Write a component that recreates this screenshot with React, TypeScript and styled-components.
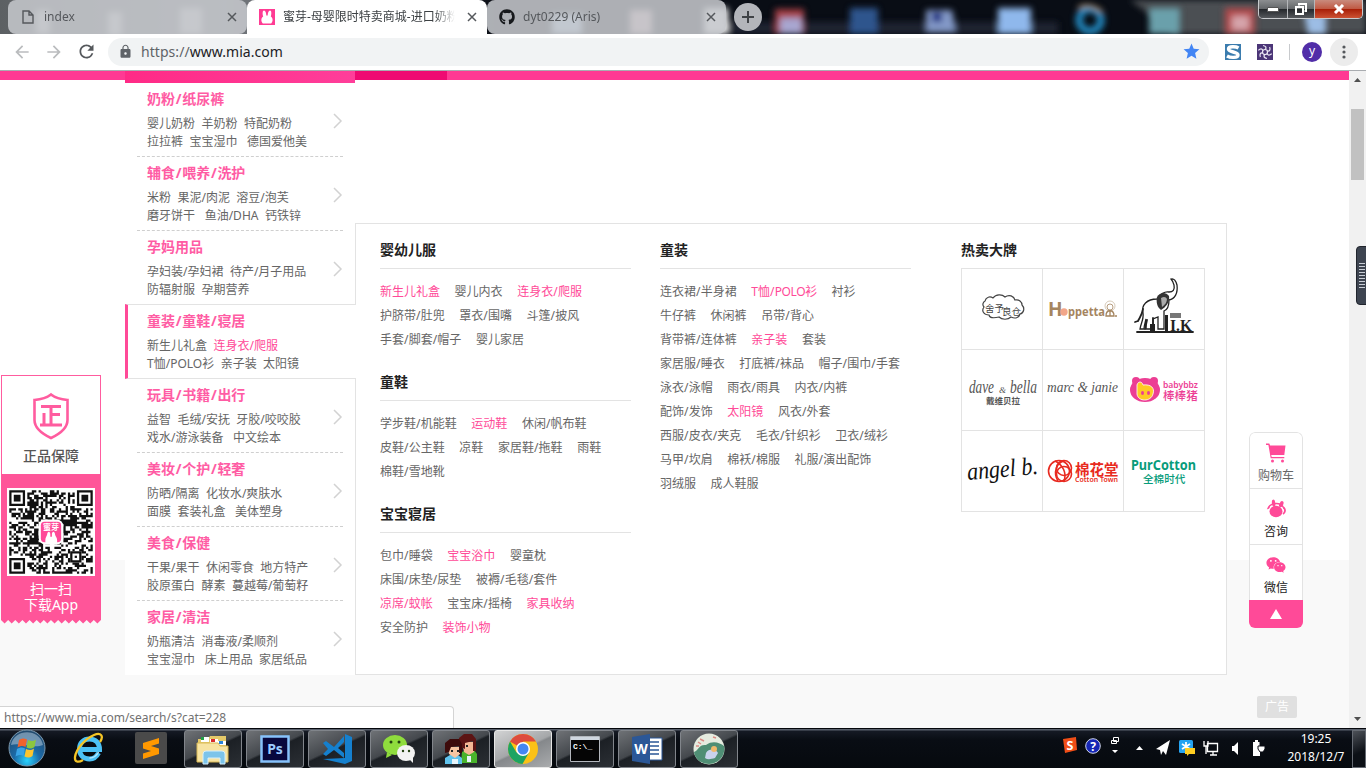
import React from "react";
import styled, { createGlobalStyle } from "styled-components";
import { FaGithub, FaWeixin } from "react-icons/fa";
import { MdArrowBack, MdArrowForward, MdLock, MdRefresh, MdStar } from "react-icons/md";

const PINK = "#ff4a98";
const LINE = "#e3e3e3";

const Global = createGlobalStyle`
  * { box-sizing: border-box; }
  body { margin: 0; overflow: hidden; }
  svg { display: block; flex: none; }
`;

const Screen = styled.div`
  width: 1366px;
  height: 768px;
  display: flex;
  flex-direction: column;
  overflow: hidden;
  background: #fff;
  color: #666;
  font: 12px/18px "Noto Sans", "Noto Sans CJK SC", sans-serif;
`;

/* ---------- browser frame ---------- */

const TabStrip = styled.header`
  position: relative;
  height: 34px;
  flex: none;
  display: flex;
  align-items: flex-start;
  padding-left: 8px;
  background: #090d15;
`;

const Backdrop = styled.svg`
  position: absolute;
  left: 0;
  top: 0;
`;

const Tab = styled.div<{ $active?: boolean; $width: number }>`
  position: relative;
  width: ${(p) => p.$width}px;
  height: 34px;
  display: flex;
  align-items: center;
  padding: 0 10px 0 12px;
  border-radius: ${(p) => (p.$active ? "8px 8px 0 0" : "8px")};
  background: ${(p) => (p.$active ? "#fff" : "rgba(196, 198, 203, 0.88)")};
  color: ${(p) => (p.$active ? "#3c4043" : "#55585c")};
`;

const TabIcon = styled.span`
  width: 16px;
  height: 16px;
  display: flex;
  align-items: center;
  justify-content: center;
`;

const TabTitle = styled.span<{ $fade?: boolean }>`
  flex: 1;
  margin: 0 12px 0 8px;
  overflow: hidden;
  white-space: nowrap;
  ${(p) => p.$fade && "mask-image: linear-gradient(90deg, #000 88%, transparent);"}
`;

const NewTab = styled.div`
  position: relative;
  width: 28px;
  height: 28px;
  margin: 3px 0 0 8px;
  border-radius: 50%;
  background: #b3b5ba;
  display: flex;
  align-items: center;
  justify-content: center;
`;

const WindowControls = styled.div`
  position: relative;
  display: flex;
  height: 19px;
  margin: 0 3px 0 auto;
  border: 1px solid #c9cbce;
  border-top: 0;
  border-radius: 0 0 5px 5px;
  overflow: hidden;
`;

const ControlButton = styled.div<{ $w: number; $close?: boolean }>`
  width: ${(p) => p.$w}px;
  display: flex;
  align-items: center;
  justify-content: center;
  background: ${(p) =>
    p.$close
      ? "linear-gradient(#c98b7d, #c05a44 48%, #a82008 52%, #cc5233)"
      : "linear-gradient(#8c8e90, #65686b 48%, #25282c 52%, #55585c)"};
  & + & { border-left: 1px solid #b5b7ba; }
`;

const Toolbar = styled.div`
  height: 37px;
  flex: none;
  display: flex;
  align-items: center;
  padding: 0 8px 1px 6px;
  border-bottom: 1px solid #a9acb0;
  background: #fff;
`;

const ToolButton = styled.span<{ $color: string }>`
  width: 32px;
  display: flex;
  justify-content: center;
  color: ${(p) => p.$color};
`;

const AddressBar = styled.div`
  width: 1101px;
  height: 28px;
  margin-left: 6px;
  padding: 0 8px 0 10px;
  border-radius: 14px;
  background: #f1f3f4;
  display: flex;
  align-items: center;
  color: #5f6368;
`;

const Url = styled.span`
  flex: 1;
  margin-left: 8px;
  font-size: 14px;
  letter-spacing: 0.05px;
  b { color: #202124; font-weight: 400; }
`;

const Extension = styled.span<{ $ml: number }>`
  width: 16px;
  height: 16px;
  margin-left: ${(p) => p.$ml}px;
`;

const Divider = styled.span`
  width: 1px;
  height: 16px;
  margin-left: 16px;
  background: #c8cacd;
`;

const Avatar = styled.span`
  width: 20px;
  height: 20px;
  margin-left: 12px;
  border-radius: 50%;
  background: #512da8;
  color: #fff;
  text-align: center;
  line-height: 18px;
`;

const MenuButton = styled.span`
  width: 28px;
  height: 28px;
  margin-left: 8px;
  border-radius: 50%;
  background: #ececec;
  display: flex;
  align-items: center;
  justify-content: center;
`;

/* ---------- page ---------- */

const Body = styled.div`
  height: 657px;
  flex: none;
  display: flex;
`;

const Viewport = styled.main`
  position: relative;
  width: 1349px;
  overflow: hidden;
  background: linear-gradient(#fff 489px, #f9f9f9 489px);
`;

const NavBar = styled.div`
  height: 9px;
  display: flex;
  padding-left: 125px;
  background: #ff3993;
`;

const NavHead = styled.div`
  width: 230px;
  height: 12px;
  background: linear-gradient(100deg, #ff2a86, #ff3e9a);
`;

const NavCurrent = styled.div`
  width: 92px;
  background: #ef0a72;
`;

const Main = styled.div`
  display: flex;
  align-items: flex-start;
  padding: 3px 0 0 125px;
`;

const Sidebar = styled.nav`
  position: relative;
  z-index: 1;
  width: 230px;
  height: 592px;
  background: #fff;
`;

const Category = styled.section<{ $active?: boolean; $plain?: boolean }>`
  height: 74px;
  margin: 0 12px;
  padding: 6px 0 0 10px;
  display: flex;
  justify-content: space-between;
  white-space: pre;
  border-bottom: ${(p) => (p.$plain ? "0" : "1px dashed #cfcfcf")};
  ${(p) =>
    p.$active &&
    `
    width: 231px;
    height: 75px;
    margin: -1px 0 0;
    padding-left: 19px;
    background: #fff;
    border: 1px solid ${LINE};
    border-left: 3px solid ${PINK};
    border-right: 0;
  `}
`;

const CategoryTitle = styled.h3`
  margin: 0 0 6px;
  font-size: 14px;
  line-height: 20px;
  font-weight: 700;
  color: #ff5ca4;
  i { font-style: normal; margin: 0 0.7px; }
`;

const CategoryLine = styled.div`
  height: 18px;
  word-spacing: 0.1px;
`;

const Chevron = styled.svg`
  margin-top: 24px;
`;

const Em = styled.em`
  font-style: normal;
  color: ${PINK};
`;

const Flyout = styled.div`
  width: 872px;
  height: 452px;
  margin: 140px 0 0 0;
  padding: 8px 0 0 24px;
  display: flex;
  border: 1px solid ${LINE};
  background: #fff;
`;

const Column = styled.div<{ $gap: number }>`
  width: 251px;
  margin-right: ${(p) => p.$gap}px;
`;

const GroupTitle = styled.h4<{ $bare?: boolean }>`
  height: ${(p) => (p.$bare ? 36 : 37)}px;
  margin: 0;
  border-bottom: ${(p) => (p.$bare ? "0" : `1px solid ${LINE}`)};
  font-size: 14px;
  line-height: 36px;
  font-weight: 700;
  color: #222;
`;

const GroupBody = styled.div`
  padding: 11px 0 12px;
`;

const GroupRow = styled.div`
  height: 24px;
  display: flex;
  align-items: center;
  gap: 14.6px;
  white-space: nowrap;
`;

const Link = styled.a<{ $hot?: boolean }>`
  color: ${(p) => (p.$hot ? PINK : "#666")};
  i { font-style: normal; margin-right: 0.2px; }
`;

const BrandGrid = styled.div`
  width: 244px;
  display: grid;
  grid-template-columns: repeat(3, 81px);
  grid-auto-rows: 81px;
  border: solid ${LINE};
  border-width: 1px 0 0 1px;
`;

const BrandCell = styled.div`
  border: solid ${LINE};
  border-width: 0 1px 1px 0;
`;

/* ---------- floating widgets ---------- */

const AppPromo = styled.aside`
  position: absolute;
  left: 1px;
  top: 304px;
  width: 100px;
`;

const Guarantee = styled.div`
  height: 99px;
  padding-top: 16px;
  display: flex;
  flex-direction: column;
  align-items: center;
  border: 1px solid #ff5c9f;
  border-bottom: 0;
  background: #fff;
  color: #555;
  font-size: 14px;
  font-weight: 500;
  line-height: 20px;
`;

const ScanBox = styled.div`
  height: 146px;
  padding-top: 14px;
  display: flex;
  flex-direction: column;
  align-items: center;
  background: #ff5599;
  color: #fff;
  font-size: 14px;
  line-height: 16px;
`;

const ScanText = styled.div`
  margin-top: 5px;
  text-align: center;
`;

const Tools = styled.aside`
  position: absolute;
  left: 1249px;
  top: 361px;
  width: 54px;
  border-radius: 6px;
  overflow: hidden;
  background: #fff;
`;

const ToolItem = styled.div<{ $dark?: boolean; $first?: boolean }>`
  height: 56px;
  padding-top: 10px;
  display: flex;
  flex-direction: column;
  align-items: center;
  gap: 4px;
  border: 1px solid ${LINE};
  border-bottom: 0;
  border-radius: ${(p) => (p.$first ? "6px 6px 0 0" : "0")};
  color: ${(p) => (p.$dark ? "#222" : "#666")};
`;

const ToTop = styled.div`
  height: 28px;
  display: flex;
  align-items: center;
  justify-content: center;
  background: #ff4a98;
`;

const AdLabel = styled.div`
  position: absolute;
  left: 1257px;
  top: 625px;
  width: 40px;
  height: 22px;
  border-radius: 2px;
  background: #e0e0e0;
  color: #fff;
  line-height: 22px;
  text-align: center;
`;

const StatusBubble = styled.div`
  position: absolute;
  left: -1px;
  bottom: 0;
  width: 455px;
  height: 22px;
  padding-left: 4px;
  line-height: 21px;
  border: 1px solid #d4d4d4;
  border-bottom: 0;
  border-radius: 0 4px 0 0;
  background: #fff;
  color: #717171;
`;

const Scrollbar = styled.div`
  width: 17px;
  display: flex;
  flex-direction: column;
  align-items: center;
  background: #f1f1f1;
  padding: 7px 0;
`;

const Thumb = styled.div`
  width: 13px;
  height: 71px;
  margin: 27px 0 auto;
  background: #c1c1c1;
`;

const SideGrip = styled.div`
  position: absolute;
  left: 1356px;
  top: 246px;
  width: 12px;
  height: 59px;
  border-radius: 4px 0 0 4px;
  background: #3d4450;
  border: 1px solid #20242c;
  display: flex;
  align-items: center;
  justify-content: center;
`;

/* ---------- taskbar ---------- */

const Taskbar = styled.footer`
  height: 40px;
  display: flex;
  align-items: center;
  background: linear-gradient(#05070c 1px, #59606c 1px, #59606c 2px, #151a24 3px, #090d14 12px, #060a0e);
`;

const Launcher = styled.div<{ $w: number }>`
  width: ${(p) => p.$w}px;
  display: flex;
  justify-content: center;
`;

const TaskButton = styled.div<{ $front?: boolean }>`
  width: 58px;
  height: 38px;
  margin: 1px 4px 0 0;
  display: flex;
  align-items: center;
  justify-content: center;
  border: 1px solid ${(p) => (p.$front ? "#e6e6e6" : "#81858b")};
  border-radius: 3px;
  background: ${(p) =>
    p.$front
      ? "linear-gradient(155deg, #d2d3d4, #a5a7a9 48%, #85888b 52%, #a9abad)"
      : "linear-gradient(155deg, #6f7276, #44484d 46%, #1c2025 50%, #2b2f34)"};
`;

const Tray = styled.div`
  margin-left: auto;
`;

const Clock = styled.div`
  width: 74px;
  margin-left: 0;
  color: #fff;
  line-height: 18px;
  text-align: center;
  padding-left: 2px;
`;

const ShowDesktop = styled.div`
  width: 14px;
  height: 38px;
  margin: 1px 0 0 0;
  border: 1px solid #666b73;
  background: linear-gradient(155deg, #4d5158, #0c1016 60%);
`;

/* ---------- data ---------- */

type CategoryData = { title: string; lines: string[]; active?: boolean; plain?: boolean };

const categories: CategoryData[] = [
  { title: "奶粉/纸尿裤", lines: ["婴儿奶粉  羊奶粉  特配奶粉", "拉拉裤  宝宝湿巾   德国爱他美"] },
  { title: "辅食/喂养/洗护", lines: ["米粉  果泥/肉泥  溶豆/泡芙", "磨牙饼干   鱼油/DHA  钙铁锌"] },
  { title: "孕妈用品", lines: ["孕妇装/孕妇裙  待产/月子用品", "防辐射服  孕期营养"], plain: true },
  { title: "童装/童鞋/寝居", lines: ["新生儿礼盒  *连身衣/爬服*", "T恤/POLO衫  亲子装  太阳镜"], active: true },
  { title: "玩具/书籍/出行", lines: ["益智  毛绒/安抚  牙胶/咬咬胶", "戏水/游泳装备   中文绘本"] },
  { title: "美妆/个护/轻奢", lines: ["防晒/隔离  化妆水/爽肤水", "面膜  套装礼盒   美体塑身"] },
  { title: "美食/保健", lines: ["干果/果干  休闲零食  地方特产", "胶原蛋白  酵素  蔓越莓/葡萄籽"] },
  { title: "家居/清洁", lines: ["奶瓶清洁  消毒液/柔顺剂", "宝宝湿巾   床上用品  家居纸品"], plain: true },
];

type Group = { title: string; rows: string[] };

const infant: Group[] = [
  { title: "婴幼儿服", rows: ["*新生儿礼盒 婴儿内衣 *连身衣/爬服", "护脐带/肚兜 罩衣/围嘴 斗篷/披风", "手套/脚套/帽子 婴儿家居"] },
  { title: "童鞋", rows: ["学步鞋/机能鞋 *运动鞋 休闲/帆布鞋", "皮鞋/公主鞋 凉鞋 家居鞋/拖鞋 雨鞋", "棉鞋/雪地靴"] },
  { title: "宝宝寝居", rows: ["包巾/睡袋 *宝宝浴巾 婴童枕", "床围/床垫/尿垫 被褥/毛毯/套件", "*凉席/蚊帐 宝宝床/摇椅 *家具收纳", "安全防护 *装饰小物"] },
];

const children: Group[] = [
  {
    title: "童装",
    rows: [
      "连衣裙/半身裙 *T恤/POLO衫 衬衫",
      "牛仔裤 休闲裤 吊带/背心",
      "背带裤/连体裤 *亲子装 套装",
      "家居服/睡衣 打底裤/袜品 帽子/围巾/手套",
      "泳衣/泳帽 雨衣/雨具 内衣/内裤",
      "配饰/发饰 *太阳镜 风衣/外套",
      "西服/皮衣/夹克 毛衣/针织衫 卫衣/绒衫",
      "马甲/坎肩 棉袄/棉服 礼服/演出配饰",
      "羽绒服 成人鞋服",
    ],
  },
];

const slashed = (text: string) =>
  text.split("/").map((part, n) => (
    <React.Fragment key={n}>
      {n > 0 && <i>/</i>}
      {part.includes("POLO") ? <span style={{ letterSpacing: "-0.35px" }}>{part}</span> : part}
    </React.Fragment>
  ));

const Groups = ({ items }: { items: Group[] }) => (
  <>
    {items.map((g) => (
      <section key={g.title}>
        <GroupTitle>{g.title}</GroupTitle>
        <GroupBody>
          {g.rows.map((row) => (
            <GroupRow key={row}>
              {row.split(" ").map((w) => (
                <Link key={w} $hot={w[0] === "*"}>{slashed(w.replace("*", ""))}</Link>
              ))}
            </GroupRow>
          ))}
        </GroupBody>
      </section>
    ))}
  </>
);

/* ---------- drawings ---------- */

const QR_SIZE = 37;

const qrModules = (() => {
  let path = "";
  let seed = 20181;
  const corner = (x: number, y: number) =>
    (x < 8 && y < 8) || (x > QR_SIZE - 9 && y < 8) || (x < 8 && y > QR_SIZE - 9);
  for (let y = 0; y < QR_SIZE; y++) {
    for (let x = 0; x < QR_SIZE; x++) {
      seed = (seed * 1103515245 + 12345) % 2147483648;
      const align = x > 26 && x < 32 && y > 26 && y < 32;
      if (!corner(x, y) && !align && seed / 2147483648 > 0.47) path += `M${x} ${y}h1v1h-1z`;
    }
  }
  return path;
})();

const QrCode = () => (
  <svg width="88" height="88" viewBox="-1 -1 39 39">
    <rect x="-1" y="-1" width="39" height="39" fill="#fff" />
    <path d={qrModules} fill="#111" />
    {[[0, 0], [30, 0], [0, 30]].map(([x, y]) => (
      <g key={`${x}-${y}`} transform={`translate(${x} ${y})`} fill="#111">
        <path d="M.5 .5h6v6h-6z" fill="none" stroke="#111" />
        <path d="M2 2h3v3H2z" />
      </g>
    ))}
    <path d="M27.5 27.5h4v4h-4z" fill="#fff" stroke="#111" />
    <path d="M29 29h1v1h-1z" fill="#111" />
    <rect x="13" y="13" width="11" height="11" rx="3" fill="#fff" />
    <rect x="14" y="14" width="9" height="9" rx="1.6" fill="#ff4a98" />
    <text x="18.5" y="17.7" fontSize="3.6" fontWeight="700" textAnchor="middle" fill="#fff">蜜芽</text>
    <path d="M16 24v-2c0-1 .6-1.6 .8-2.4c.1-1.6 1.4-1.6 1.4 0v1h.7v-1c0-1.6 1.3-1.6 1.4 0c.1 .8 .9 1.4 .9 2.4v2z" fill="#fff" />
  </svg>
);

const ShieldIcon = () => (
  <svg width="38" height="48" viewBox="0 0 38 48" fill="none" stroke="#ff5c9f" strokeWidth="2.6">
    <path d="M19 2.500C14.500 6 8 7.500 2.500 8v20c0 9 8 14 16.500 18c8.500-4 16.500-9 16.500-18V8C30 7.500 23.500 6 19 2.500z" />
    <path d="M9 14.500h20M19 14.500v18M20 22.500h8M12 21v12M8 33h22" strokeWidth="3" />
  </svg>
);

const CartIcon = () => (
  <svg width="20" height="20" viewBox="0 0 20 20" fill={PINK}>
    <path d="M0 .5h3.300l.8 2H19.500L18.300 12H5.200l.5 2h12.600v1.300H4.700L2.400 2H0z" />
    <circle cx="6.500" cy="18" r="1.500" />
    <circle cx="16.500" cy="18" r="1.500" />
  </svg>
);

const ServiceIcon = () => (
  <svg width="20" height="20" viewBox="0 0 20 20" fill={PINK}>
    <path d="M2 9.500C3.500 5.500 6.500 4.500 10 4.500s6.500 1.500 8 5" fill="none" stroke={PINK} strokeWidth="1.500" />
    <ellipse cx="10" cy="12.500" rx="6.500" ry="5.800" />
    <ellipse cx="7.600" cy="4.200" rx="1.700" ry="3.600" transform="rotate(-8 7.600 4)" />
    <ellipse cx="15.400" cy="5.200" rx="1.900" ry="3.200" transform="rotate(25 15.400 5)" />
    <path d="M17.500 8.500c2.500 2 1.500 5.500-.5 6.500" fill="none" stroke={PINK} strokeWidth="1.800" />
    <path d="M.8 10.500l2-3.500 1 2z" />
  </svg>
);

const Bunny = () => (
  <svg width="16" height="16" viewBox="0 0 16 16">
    <path d="M0 0h16v16H0z" fill="#ff3b93" />
    <path d="M3.800 14.500C1.500 12 2.200 8.500 4.200 7.500C3.200 4.500 3.600 1.500 5 1.500S7.300 4 7.300 6.500h1.400C8.700 4 9.600 1.500 11 1.500s1.800 3 .8 6c2 1 2.700 4.500 .4 7z" fill="#fff" />
  </svg>
);

const CloseIcon = () => (
  <svg width="10" height="10" viewBox="0 0 10 10" stroke="#55585c" strokeWidth="1.500">
    <path d="M1 1l8 8M9 1L1 9" />
  </svg>
);

const TabBackdrop = () => (
  <Backdrop width="1366" height="34">
    <defs>
      <filter id="soft" x="-30%" y="-30%" width="160%" height="160%"><feGaussianBlur stdDeviation="3" /></filter>
      <linearGradient id="grey">
        <stop offset="0" stopColor="#5c6063" />
        <stop offset="0.450" stopColor="#777b80" />
        <stop offset="1" stopColor="#0a0d14" />
      </linearGradient>
    </defs>
    <rect width="500" height="34" fill="url(#grey)" />
    <path d="M1130 0h236v34h-190z" fill="#4b4f53" filter="url(#soft)" />
    <g filter="url(#soft)">
      <path d="M36 10h14v24H36zM108 12h14v24h-14zM180 8h22v26h-22z" fill="#fff" opacity=".7" />
      <path d="M552 14h30v20h-30z" fill="#b7d6f3" />
      <path d="M630 10h22v24h-22z" fill="#dfb7bd" />
      <path d="M704 8h24v26h-24z" fill="#fff" />
      <path d="M728 22h330v12H728z" fill="#2b3442" opacity=".6" />
      <path d="M775 9h29v25h-29z" fill="#a64045" />
      <path d="M780 18h22v16h-22z" fill="#a8a6d0" />
      <path d="M850 8h28v26h-28z" fill="#2d558d" />
      <path d="M926 10h26l4 22h-30z" fill="#8399c8" />
      <path d="M932 12h10v10h-10z" fill="#182d83" />
      <path d="M998 8h33v26h-33z" fill="#8fb8ec" />
      <circle cx="1090" cy="20" r="11" fill="none" stroke="#238cc4" strokeWidth="7" />
      <path d="M1078 8q12-6 24 4" stroke="#b6925c" strokeWidth="3" fill="none" />
      <path d="M1149 8h31v26h-31z" fill="#6aa0ab" />
      <path d="M1225 8h30v26h-30z" fill="#b34a4b" />
      <path d="M1232 16h17v14h-17z" fill="#d6a4ab" />
      <path d="M1304 14h22v20h-18z" fill="#9cbde5" />
    </g>
  </Backdrop>
);

const sans = '"Noto Sans", "Noto Sans CJK SC", sans-serif';
const script = '"Liberation Serif", "Noto Sans CJK SC", serif';

const brands = [
  <svg key="shuer" width="80" height="80" viewBox="0 0 80 80" fontFamily={sans}>
    <path d="M23 32c1-4 5-5 8-3c3-4 9-4 12-1c4-3 9-1 10 3c4-1 7 2 7 5c3 3 2 8-2 9c-1 4-5 5-9 3c-3 3-9 3-12 0c-4 1-9 2-10-2c-5 0-8-4-5-8c-2-2-1-5 1-6z" fill="#fff" stroke="#444" strokeWidth="1.200" />
    <text x="23" y="43" fontSize="9.500" fill="#444">舍予</text>
    <text x="40" y="46" fontSize="9.500" fill="#444">良仓</text>
  </svg>,
  <svg key="hoppetta" width="80" height="80" viewBox="0 0 80 80" fontFamily={sans}>
    <text x="5" y="47" fontSize="19" fontWeight="700" fill="#a5855f">H</text>
    <circle cx="21" cy="43" r="3.700" fill="#f2a689" />
    <text x="25" y="47" fontSize="13" fontWeight="700" fill="#a5855f" textLength="37" lengthAdjust="spacingAndGlyphs">ppetta</text>
    <g fill="none" stroke="#a5855f" strokeWidth=".8">
      <circle cx="67" cy="37" r="5" stroke="#cdbda7" /><circle cx="67" cy="38" r="3" />
      <path d="M63 47c0-7 8-7 8 0zM67 42v5M72 47h2" strokeWidth="1.300" />
    </g>
  </svg>,
  <svg key="ik" width="80" height="80" viewBox="0 0 80 80" fontFamily={script}>
    <g fill="none" stroke="#222" strokeWidth="1.300" strokeLinecap="round">
      <path d="M19 44c-2-8 4-14 14-14c3-5 8-8 12-7c4 0 6-2 5-7c-1-3-2-5-3-6c3-1 5 2 6 6c1 8-2 14-8 15c0 6-2 10-5 11v18h-6V48l-5 2v10h-7V50c-1 4-2 7-2 10h-4c1-6 4-10 3-16z" fill="#fff" />
      <path d="M19 40c-1 6-3 8-5 12M14 52l-3 1M13 63h56M29 49v12M23 51l-2 9" strokeWidth="1.800" />
    </g>
    <path d="M33 28c3-5 9-5 12-1c1 6-3 11-8 14c-4-3-5-8-4-13z" fill="#333" />
    <path d="M37 29c3-2 5-1 6 1c0 3-2 6-5 8z" fill="#aaa" />
    <path d="M26 55h5v7h-5zM41 46h3v16h-3z" fill="#222" />
    <path d="M46 44h11v5H46z" fill="#777" />
    <text x="46" y="62" fontSize="16" fontWeight="700" fill="#222" textLength="22" lengthAdjust="spacingAndGlyphs">I.K</text>
  </svg>,
  <svg key="dave" width="80" height="80" viewBox="0 0 80 80" fontFamily={script} fill="#555">
    <text x="7" y="43" fontSize="19" fontStyle="italic" textLength="25" lengthAdjust="spacingAndGlyphs">dave</text>
    <text x="37" y="43" fontSize="9" fontStyle="italic">&amp;</text>
    <text x="48" y="43" fontSize="19" fontStyle="italic" textLength="27" lengthAdjust="spacingAndGlyphs">bella</text>
    <text x="24" y="54" fontSize="8.500" fontWeight="700" fontFamily={sans}>戴维贝拉</text>
  </svg>,
  <svg key="marc" width="80" height="80" viewBox="0 0 80 80" fontFamily={script} fill="#555">
    <text x="4" y="42" fontSize="15" fontStyle="italic" textLength="71" lengthAdjust="spacingAndGlyphs">marc &amp; janie</text>
  </svg>,
  <svg key="bbz" width="80" height="80" viewBox="0 0 80 80" fontFamily={sans} fill="#ec3e94">
    <circle cx="12" cy="31" r="4" /><circle cx="30" cy="31" r="4" />
    <ellipse cx="21" cy="40" rx="15" ry="12" />
    <path d="M13 35c1-4 5-4 6 0c8-1 12 3 10 9c-2 8-15 8-16 0z" fill="#ffca24" stroke="#fff" strokeWidth=".8" />
    <ellipse cx="18.500" cy="43" rx="1.500" ry="2" /><ellipse cx="24.500" cy="43" rx="1.500" ry="2" />
    <text x="39" y="38" fontSize="9" fontWeight="600" textLength="35" lengthAdjust="spacingAndGlyphs">babybbz</text>
    <text x="39" y="50" fontSize="11.600" fontWeight="500">棒棒猪</text>
  </svg>,
  <svg key="angel" width="80" height="80" viewBox="0 0 80 80" fontFamily={script} fill="#111">
    <text x="5" y="46" fontSize="25" fontStyle="italic" textLength="71" lengthAdjust="spacingAndGlyphs" transform="rotate(-5 40 40)">angel b.</text>
  </svg>,
  <svg key="cotton" width="80" height="80" viewBox="0 0 80 80" fontFamily={sans} fill="#e82a20">
    <g fill="none" stroke="#e82a20" strokeWidth="1.600">
      <circle cx="16" cy="40" r="10.500" /><circle cx="21" cy="37" r="7.500" /><circle cx="21" cy="43" r="7.500" />
      <path d="M15 50c-5-8-2-18 6-20M12 30c8 4 12 12 9 20" />
    </g>
    <text x="32" y="44" fontSize="14.500" fontWeight="700">棉花堂</text>
    <text x="32" y="51" fontSize="7" fontWeight="600" textLength="43" lengthAdjust="spacingAndGlyphs">Cotton Town</text>
  </svg>,
  <svg key="pur" width="80" height="80" viewBox="0 0 80 80" fontFamily={sans} fill="#079c7b">
    <text x="7" y="39" fontSize="14" fontWeight="700" textLength="65" lengthAdjust="spacingAndGlyphs">PurCotton</text>
    <text x="19" y="52" fontSize="10.600" fontWeight="500">全棉时代</text>
  </svg>,
];

const StartOrb = () => (
  <svg width="38" height="38" viewBox="0 0 38 38">
    <defs>
      <radialGradient id="orb" cx=".5" cy=".85" r=".8">
        <stop offset="0" stopColor="#2ad3ff" /><stop offset=".45" stopColor="#1b6aa8" /><stop offset="1" stopColor="#234c70" />
      </radialGradient>
    </defs>
    <circle cx="19" cy="19" r="18" fill="url(#orb)" stroke="#7c98ad" />
    <path d="M3 16C6-1 32-1 35 16c-9 4-23-3-32 0z" fill="#b3c9da" opacity=".55" />
    <path d="M11 11c3-2 5-2 8-.5l-1.500 7.500c-3-1.500-5-1-8 .5z" fill="#f0632d" />
    <path d="M20 11c3 1.500 5 1.500 8-.5l-1.500 7.500c-3 2-5 2-8 .5z" fill="#8cc63e" />
    <path d="M9 20c3-1.500 5-2 8-.5L15.500 27c-3-1.500-5-1-8 .5z" fill="#39a3e6" />
    <path d="M18 20c3 1.500 5 1.500 8-.5L24.500 27c-3 2-5 2-8 .5z" fill="#fdc52e" />
  </svg>
);

const ExplorerE = () => (
  <svg width="32" height="32" viewBox="0 0 32 32" fill="none">
    <path d="M25.500 21c-2 4-5 6-9 6c-6 0-10-4-10-10S10.500 7 16.500 7s10 4 10 10.500H9" stroke="#4cc1f5" strokeWidth="5" />
    <path d="M25.500 20c-2 4-5 6-9 6" stroke="#b4e8ff" strokeWidth="1.500" />
    <path d="M27 10c4-6 1-10-6-7C12 7 3 17 2 25c-.5 5 3 6 8 3" stroke="#f5c526" strokeWidth="2.300" />
  </svg>
);

const Sublime = () => (
  <svg width="32" height="32" viewBox="0 0 32 32">
    <rect width="32" height="32" rx="2" fill="#4a4a4a" />
    <path d="M8 11l16-5v5.500l-8 2.500 8 2.500V22L8 27v-5.500l8-2.500-8-2.500z" fill="#ff9800" />
  </svg>
);

const taskIcons = [
  <svg key="folder" width="34" height="32" viewBox="0 0 34 32">
    <path d="M2 6h10l2-3h16v24H2z" fill="#e4c969" />
    <path d="M5 4h8v5H5zM14 6h8v4h-8zM22 8h8v4h-8z" fill="#fff" />
    <path d="M5 4h3v3H5z" fill="#22a045" /><path d="M15 6h4v3h-4z" fill="#d92b2b" /><path d="M23 8h4v3h-4z" fill="#2a83d9" />
    <path d="M1 10h21l2 3h8v16H1z" fill="#f7e3a1" stroke="#d9b956" />
    <path d="M7 31V21q0-3 3-3h16q3 0 3 3v10h-5v-6H12v6z" fill="#7cc4ea" stroke="#d5effc" />
  </svg>,
  <svg key="ps" width="30" height="28" viewBox="0 0 30 28" fontFamily={sans}>
    <rect x="1.500" y="1.500" width="27" height="25" fill="#08083d" stroke="#87c2fb" strokeWidth="2.500" />
    <text x="15" y="19" fontSize="14" fontWeight="700" textAnchor="middle" fill="#9ccbff">Ps</text>
  </svg>,
  <svg key="code" width="32" height="32" viewBox="0 0 32 32" fill="#1580ce">
    <path d="M24 1l7 3v24l-7 3L2 26l22-1z" />
    <path d="M24 8v14L5 10 8 8.500z" fill="none" />
    <path d="M2 10l3-2 8 6 10-11v6l-6 6 6 5v5L13 17l-8 6-3-2 5-5z" />
  </svg>,
  <svg key="wechat" width="34" height="30" viewBox="0 0 34 30">
    <ellipse cx="13" cy="11" rx="12" ry="10" fill="#8fdc3d" /><path d="M5 18l-1 6 6-3z" fill="#8fdc3d" />
    <ellipse cx="24" cy="19" rx="9" ry="8" fill="#f2f2f2" /><path d="M27 25l4 4v-6z" fill="#f2f2f2" />
    <g fill="#234010"><circle cx="9" cy="8" r="1.500" /><circle cx="17" cy="8" r="1.500" /><circle cx="21" cy="17" r="1.200" /><circle cx="27" cy="17" r="1.200" /></g>
  </svg>,
  <svg key="people" width="34" height="34" viewBox="0 0 34 34">
    <path d="M18 20l4-2h8l3 4v9H17z" fill="#49b32c" /><path d="M1 32v-6l5-3h8l4 3v6z" fill="#61c3ed" />
    <path d="M18 10h12v10l-5 3-5-3z" fill="#f4b795" /><path d="M15 14V6l5-4h8l4 5v12h-3V9l-8 2v6z" fill="#5c1414" />
    <path d="M4 15h12v7l-5 4-6-4z" fill="#f9c5a1" /><path d="M1 21V11l5-4h9l3 5v9h-3v-7l-8 1-2 5z" fill="#3d0b0b" />
    <path d="M7 18h2v2H7zM13 18h2v2h-2zM22 13h2v2h-2z" fill="#222" />
    <path d="M8 27h6v5H8zM23 24h4v6h-4z" fill="#e7f4fa" />
  </svg>,
  <svg key="chrome" width="32" height="32" viewBox="0 0 32 32">
    <circle cx="16" cy="16" r="15" fill="#fbc116" />
    <path d="M16 16L3 8.500A15 15 0 0 1 29 8.500H16z" fill="#dd4b3e" />
    <path d="M3 8.500A15 15 0 0 0 15.500 31L22 19.500 16 16 9.500 19.500z" fill="#1da462" />
    <circle cx="16" cy="16" r="7" fill="#fff" /><circle cx="16" cy="16" r="5.500" fill="#4587f3" />
  </svg>,
  <svg key="cmd" width="30" height="26" viewBox="0 0 30 26" fontFamily='"Liberation Mono", monospace'>
    <path d="M.5 .5h29v25H.5z" fill="#050505" stroke="#b3b7bd" /><path d="M1 1h28v3H1z" fill="#cfd6df" />
    <text x="3" y="13" fontSize="8" fontWeight="700" fill="#fff">C:\_</text>
  </svg>,
  <svg key="word" width="32" height="32" viewBox="0 0 32 32" fontFamily={sans}>
    <path d="M16 5h15v22H16z" fill="#fff" stroke="#2b5797" />
    <path d="M18 9h10M18 13h10M18 17h10M18 21h10" stroke="#2b5797" strokeWidth="1.500" />
    <path d="M1 4l18-3v30L1 28z" fill="#2b5797" />
    <text x="10" y="21" fontSize="14" fontWeight="700" textAnchor="middle" fill="#fff">W</text>
  </svg>,
  <svg key="photo" width="32" height="32" viewBox="0 0 32 32">
    <circle cx="16" cy="16" r="15.500" fill="#e5ebdf" />
    <path d="M1 19c5-2 5-8 12-7c7-5 14-2 18 1c2 10-6 18-15 18C8 31 2 26 1 19z" fill="#4f8e74" />
    <path d="M13 20c3-5 10-4 12 0l-3 5c-4 1-7 2-10 0z" fill="#c9d3ed" />
    <circle cx="21" cy="16" r="3" fill="#f0b96b" />
    <path d="M5 9l3 2M7 6l4 2M3 13h3M20 4l3 1" stroke="#da8a84" strokeWidth="1.500" />
  </svg>,
];

const TrayIcons = () => (
  <svg width="216" height="38" viewBox="0 0 216 38" fontFamily={sans}>
    <path d="M1 10l13-2 1 13-12 3z" fill="#f04e17" />
    <text x="8" y="20.500" fontSize="12.500" fontWeight="700" textAnchor="middle" fill="#fff">S</text>
    <circle cx="31" cy="17" r="7.300" fill="#1526b5" stroke="#cfd5e8" />
    <text x="31" y="21.500" fontSize="12" fontWeight="700" textAnchor="middle" fill="#fff">?</text>
    <path d="M51.500 8.500h5v4h-5zM49.500 11.500h5v3h-5z" fill="#090d14" stroke="#fff" />
    <path d="M50 21h6l-3 3zM74 21h7l-3.500-4z" fill="#fff" />
    <path d="M94 20l14-9-4 15-3-4-2 4-1-5z" fill="#fff" />
    <rect x="117" y="11" width="14" height="13" rx="1.500" fill="#25a4f2" />
    <path d="M124 13v9M120 15l8 5M128 15l-8 5" stroke="#fff" strokeWidth="1.800" />
    <path d="M123 19h10v6h-6l-2 2v-2h-2z" fill="#ffce21" />
    <path d="M145.500 14.500h10v8h-10zM148 26h7M151 23v3M142 12v5h4v-5M144 17v8" fill="none" stroke="#fff" strokeWidth="1.300" />
    <path d="M170 17h2l4-4v13l-4-4h-2z" fill="#fff" />
    <path d="M191 13h7v14h-7zM193 11h3v2h-3z" fill="#fff" />
    <path d="M196 17h7v3l-2 3h-3l-2-3zM198 13v4M201 13v4" fill="#fff" stroke="#0a0d14" />
  </svg>
);

export default function App() {
  return (
    <Screen>
      <Global />
      <TabStrip>
        <TabBackdrop />
        <Tab $width={239}>
          <TabIcon>
            <svg width="12" height="14" viewBox="0 0 12 14" fill="none" stroke="#55585c" strokeWidth="1.400">
              <path d="M1 1h6l4 4v8H1zM7 1v4h4" />
            </svg>
          </TabIcon>
          <TabTitle>index</TabTitle>
          <CloseIcon />
        </Tab>
        <Tab $width={240} $active>
          <TabIcon><Bunny /></TabIcon>
          <TabTitle $fade>蜜芽-母婴限时特卖商城-进口奶粉</TabTitle>
          <CloseIcon />
        </Tab>
        <Tab $width={239}>
          <TabIcon><FaGithub size={16} color="#17191c" /></TabIcon>
          <TabTitle>dyt0229 (Aris)</TabTitle>
          <CloseIcon />
        </Tab>
        <NewTab>
          <svg width="12" height="12" viewBox="0 0 12 12" stroke="#3f4246" strokeWidth="2"><path d="M6 0v12M0 6h12" /></svg>
        </NewTab>
        <WindowControls>
          <ControlButton $w={28}>
            <svg width="12" height="5" viewBox="0 0 12 5"><path d="M.5 .5h11v4H.5z" fill="#fff" stroke="#555" /></svg>
          </ControlButton>
          <ControlButton $w={27}>
            <svg width="12" height="12" viewBox="0 0 12 12" fill="none" stroke="#fff" strokeWidth="2"><path d="M4 2.500V1h7v7H9.500M1 4h7v7H1z" /></svg>
          </ControlButton>
          <ControlButton $w={48} $close>
            <svg width="12" height="10" viewBox="0 0 12 10" stroke="#fff" strokeWidth="3"><path d="M2 1l8 8M10 1L2 9" /></svg>
          </ControlButton>
        </WindowControls>
      </TabStrip>

      <Toolbar>
        <ToolButton $color="#babcbe"><MdArrowBack size={20} /></ToolButton>
        <ToolButton $color="#babcbe"><MdArrowForward size={20} /></ToolButton>
        <ToolButton $color="#55585c"><MdRefresh size={21} /></ToolButton>
        <AddressBar>
          <MdLock size={15} />
          <Url>https://<b>www.mia.com</b></Url>
          <MdStar size={19} color="#4285f4" />
        </AddressBar>
        <Extension $ml={16}>
          <svg width="16" height="16" viewBox="0 0 16 16">
            <path d="M0 0h16v16H0z" fill="#3b7cae" />
            <path d="M13.500 4C11 2.500 3.500 2 3.500 5c0 3.500 9.500 2.500 9.500 6c0 3-7.500 3-11 1" fill="none" stroke="#fff" strokeWidth="3.400" />
          </svg>
        </Extension>
        <Extension $ml={16}>
          <svg width="16" height="16" viewBox="0 0 16 16">
            <path d="M0 0h16v16H0z" fill="#4b3577" />
            <g fill="none" stroke="#ece8f5" strokeWidth="1.200">
              <circle cx="8" cy="8" r="2.500" />
              {[0, 60, 120, 180, 240, 300].map((a) => <path key={a} d="M8 5.500C10 4 9 2 6 1.500" transform={`rotate(${a} 8 8)`} />)}
            </g>
          </svg>
        </Extension>
        <Divider />
        <Avatar>y</Avatar>
        <MenuButton>
          <svg width="4" height="14" viewBox="0 0 4 14" fill="#55585c"><circle cx="2" cy="2" r="1.600" /><circle cx="2" cy="7" r="1.600" /><circle cx="2" cy="12" r="1.600" /></svg>
        </MenuButton>
      </Toolbar>

      <Body>
        <Viewport>
          <NavBar><NavHead /><NavCurrent /></NavBar>
          <Main>
            <Sidebar>
              {categories.map((c) => (
                <Category key={c.title} $active={c.active} $plain={c.plain}>
                  <div>
                    <CategoryTitle>{slashed(c.title)}</CategoryTitle>
                    {c.lines.map((line) => (
                      <CategoryLine key={line}>
                        {line.split("*").map((part, n) => (n % 2 ? <Em key={n}>{part}</Em> : part))}
                      </CategoryLine>
                    ))}
                  </div>
                  {!c.active && (
                    <Chevron width="10" height="16" viewBox="0 0 10 16" fill="none" stroke="#d2d2d2" strokeWidth="1.500">
                      <path d="M1 1l7 7-7 7" />
                    </Chevron>
                  )}
                </Category>
              ))}
            </Sidebar>
            <Flyout>
              <Column $gap={29}><Groups items={infant} /></Column>
              <Column $gap={50}><Groups items={children} /></Column>
              <div>
                <GroupTitle $bare>热卖大牌</GroupTitle>
                <BrandGrid>{brands.map((b) => <BrandCell key={b.key}>{b}</BrandCell>)}</BrandGrid>
              </div>
            </Flyout>
          </Main>

          <AppPromo>
            <Guarantee><ShieldIcon />
              <div style={{ marginTop: 6 }}>正品保障</div>
            </Guarantee>
            <ScanBox>
              <QrCode />
              <ScanText>扫一扫<br />下载App</ScanText>
            </ScanBox>
            <svg width="100" height="4" viewBox="0 0 100 4">
              <path d={"M0 0" + "l0 0l3.570 3.500l3.570-3.500".repeat(14) + "z"} fill="#ff5599" />
            </svg>
          </AppPromo>

          <Tools>
            <ToolItem $first><CartIcon />购物车</ToolItem>
            <ToolItem $dark><ServiceIcon />咨询</ToolItem>
            <ToolItem $dark><FaWeixin size={20} color={PINK} />微信</ToolItem>
            <ToTop><svg width="12" height="10" viewBox="0 0 12 10"><path d="M6 0l6 10H0z" fill="#fff" /></svg></ToTop>
          </Tools>
          <AdLabel>广告</AdLabel>
          <StatusBubble>https://www.mia.com/search/s?cat=228</StatusBubble>
        </Viewport>
        <Scrollbar>
          <svg width="7" height="4" viewBox="0 0 7 4"><path d="M0 4h7L3.500 0z" fill="#505050" /></svg>
          <Thumb />
          <svg width="7" height="4" viewBox="0 0 7 4"><path d="M0 0h7L3.500 4z" fill="#505050" /></svg>
        </Scrollbar>
      </Body>
      <SideGrip>
        <svg width="6" height="26" viewBox="0 0 6 26" stroke="#c9ced6"><path d="M0 .5h6M0 3.500h6M0 6.500h6M0 9.500h6M0 12.500h6M0 15.500h6M0 18.500h6M0 21.500h6M0 24.500h6" /></svg>
      </SideGrip>

      <Taskbar>
        <Launcher $w={54}><StartOrb /></Launcher>
        <Launcher $w={70}><ExplorerE /></Launcher>
        <Launcher $w={60}><div style={{ marginRight: 6 }}><Sublime /></div></Launcher>
        {taskIcons.map((icon) => <TaskButton key={icon.key} $front={icon.key === "chrome"}>{icon}</TaskButton>)}
        <Tray><TrayIcons /></Tray>
        <Clock>19:25<br />2018/12/7</Clock>
        <ShowDesktop />
      </Taskbar>
    </Screen>
  );
}
